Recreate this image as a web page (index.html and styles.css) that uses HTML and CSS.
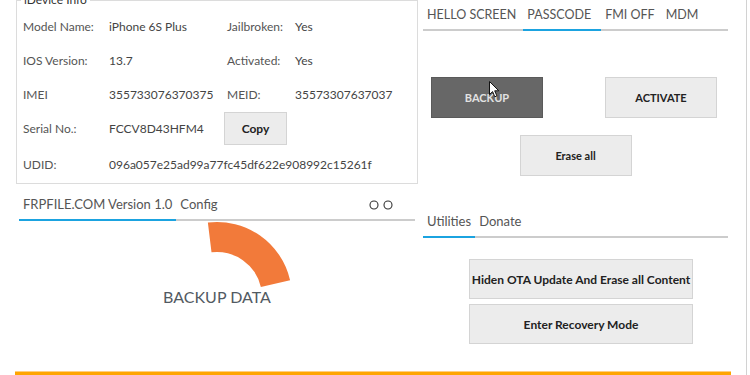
FILE: index.html
```html
<!DOCTYPE html>
<html lang="en">
<head>
    <meta charset="UTF-8">
    <title>FRPFILE.COM Tool</title>
    <link rel="stylesheet" href="styles.css">
</head>
<body>
    <div class="window">
        <div class="app">
            <!-- device info -->
            <fieldset class="device-box">
                <legend>iDevice Info</legend>
                <div class="info-grid">
                    <span class="label">Model Name:</span>
                    <span class="value">iPhone 6S Plus</span>
                    <span class="label">Jailbroken:</span>
                    <span class="value">Yes</span>

                    <span class="label">IOS Version:</span>
                    <span class="value">13.7</span>
                    <span class="label">Activated:</span>
                    <span class="value">Yes</span>

                    <span class="label">IMEI</span>
                    <span class="value">355733076370375</span>
                    <span class="label">MEID:</span>
                    <span class="value">35573307637037</span>

                    <span class="label">Serial No.:</span>
                    <span class="value">FCCV8D43HFM4</span>
                    <span class="cell-btn"><button class="btn copy-btn">Copy</button></span>
                    <span></span>

                    <span class="label udid-label">UDID:</span>
                    <span class="value udid-value">096a057e25ad99a77fc45df622e908992c15261f</span>
                </div>
            </fieldset>

            <!-- main actions -->
            <div class="panel">
                <div class="tabs tabs-top">
                    <span class="tab">HELLO SCREEN</span>
                    <span class="tab active">PASSCODE</span>
                    <span class="tab">FMI OFF</span>
                    <span class="tab">MDM</span>
                </div>
                <div class="action-row">
                    <button class="btn big-btn dark-btn">
                        BACKUP
                        <svg class="cursor" width="11" height="17" viewBox="0 0 11 17">
                            <path d="M0.5 0.5 L0.5 13.5 L3.6 10.6 L5.8 15.8 L7.9 14.9 L5.7 9.8 L9.8 9.8 Z" fill="#fff" stroke="#111" stroke-width="1"/>
                        </svg>
                    </button>
                    <button class="btn big-btn">ACTIVATE</button>
                </div>
                <div class="action-row center">
                    <button class="btn big-btn">Erase all</button>
                </div>
            </div>

            <!-- progress -->
            <div class="panel">
                <div class="tabs tabs-bottom">
                    <span class="tab active">FRPFILE.COM Version 1.0</span>
                    <span class="tab">Config</span>
                    <span class="dots">
                        <svg width="26" height="10" viewBox="0 0 26 10">
                            <circle cx="5" cy="5" r="4" fill="none" stroke="#333" stroke-width="1.1"/>
                            <circle cx="19" cy="5" r="4" fill="none" stroke="#333" stroke-width="1.1"/>
                        </svg>
                    </span>
                </div>
                <div class="progress">
                    <span class="progress-text">
                        BACKUP DATA
                        <svg class="ring" width="160" height="160" viewBox="0 0 160 160">
                            <path d="M70.86 5.56 A75 75 0 0 1 153.08 63.13 L123.85 69.88 A45 45 0 0 0 74.51 35.34 Z" fill="#f27a3a"/>
                        </svg>
                    </span>
                </div>
            </div>

            <!-- utilities -->
            <div class="panel">
                <div class="tabs tabs-util">
                    <span class="tab active">Utilities</span>
                    <span class="tab">Donate</span>
                </div>
                <div class="util-list">
                    <button class="btn util-btn">Hiden OTA Update And Erase all Content</button>
                    <button class="btn util-btn">Enter Recovery Mode</button>
                </div>
            </div>
        </div>
        <div class="statusbar"></div>
    </div>
</body>
</html>
```

FILE: styles.css
```css
* {
    margin: 0;
    padding: 0;
    box-sizing: border-box;
}

body {
    font-family: Lato, "Open Sans", sans-serif;
    background: #fff;
    color: #444;
    width: 750px;
    height: 375px;
    overflow: hidden;
}

.window {
    width: 747px;
    height: 375px;
    border-right: 1px solid #d2d2d2;
    display: flex;
    flex-direction: column;
}

.app {
    display: grid;
    grid-template-columns: 402px 305px;
    grid-template-rows: 184px 187px;
    column-gap: 5px;
    padding-left: 16px;
}

/* device info box */
.device-box {
    margin-top: -7px;
    height: 191px;
    border: 1px solid #dcdcdc;
    min-width: 0;
}

.device-box legend {
    margin-left: 4px;
    padding: 0 3px;
    font-size: 12px;
    line-height: 14px;
    color: #333;
}

.info-grid {
    display: grid;
    grid-template-columns: 86px 118px 68px 1fr;
    grid-template-rows: repeat(4, 34px) 30px;
    padding: 2px 0 0 6px;
    align-items: center;
    font-size: 12px;
}

.label {
    color: #555;
}

.value {
    color: #444;
}

.udid-label {
    margin-top: 8px;
}

.udid-value {
    grid-column: 2 / 5;
    margin-top: 8px;
}

.cell-btn {
    margin-left: -3px;
}

/* buttons */
.btn {
    font-family: inherit;
    font-weight: 700;
    color: #222;
    background: #ececec;
    border: 1px solid #d4d4d4;
}

.copy-btn {
    width: 63px;
    height: 33px;
    font-size: 12px;
}

.big-btn {
    position: relative;
    width: 112px;
    height: 41px;
    font-size: 11px;
}

.dark-btn {
    background: #676767;
    border-color: #5a5a5a;
    color: #e2e2e2;
}

.cursor {
    position: absolute;
    left: 57px;
    top: 3px;
}

/* tab strips */
.tabs {
    display: flex;
    align-items: flex-end;
    border-bottom: 2px solid #cccccc;
    color: #555;
    white-space: nowrap;
}

.tab {
    padding: 0 4px;
    line-height: 29px;
    margin-bottom: -2px;
    border-bottom: 2px solid transparent;
}

.tab.active {
    border-bottom-color: #1ba3e0;
}

.tabs-top {
    font-size: 12.5px;
}

.tabs-top .tab {
    margin-right: 3px;
}

.tabs-top .tab.active {
    padding-right: 10px;
    margin-right: 0;
}

.tabs-bottom {
    margin: 0 3px;
    height: 37px;
    font-size: 13px;
}

.tabs-util {
    margin-top: 23px;
    font-size: 13px;
}

.dots {
    margin-left: auto;
    margin-right: 20px;
    margin-bottom: 9px;
    line-height: 0;
}

.action-row {
    display: flex;
    justify-content: space-between;
    padding: 0 11px 0 8px;
    margin-top: 46px;
}

.action-row.center {
    justify-content: center;
    padding: 0;
    margin-top: 17px;
}

/* progress */
.progress {
    display: flex;
    justify-content: center;
    margin-top: 66px;
}

.progress-text {
    position: relative;
    font-size: 16px;
    line-height: 20px;
    color: #525a62;
}

.ring {
    position: absolute;
    left: 50%;
    top: 50%;
    transform: translate(-50%, -50%);
}

/* utilities */
.util-list {
    display: flex;
    flex-direction: column;
    gap: 5px;
    margin: 21px 0 0 46px;
}

.util-btn {
    width: 224px;
    height: 40px;
    font-size: 12px;
}

.statusbar {
    margin: 0 15px 0 15px;
    height: 4px;
    background: #ffa500;
    border-top: 1px solid #ffcf80;
}
```
